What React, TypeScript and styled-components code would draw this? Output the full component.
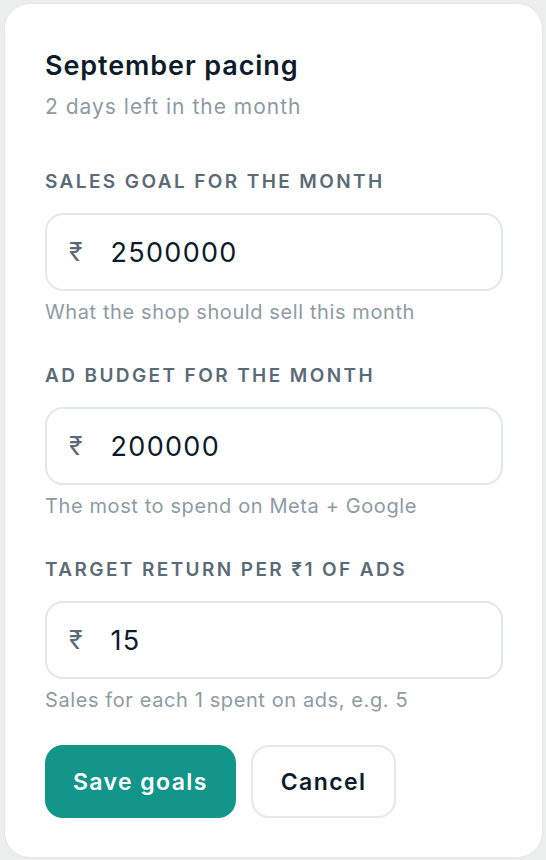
import React from "react";
import styled, { createGlobalStyle } from "styled-components";

const GlobalStyle = createGlobalStyle`
    html, body {
        margin: 0;
        padding: 0;
        background: #eceeee;
        font-family: Inter, "Noto Sans", "DejaVu Sans", sans-serif;
    }
    * { box-sizing: border-box; }
`;

const Page = styled.div`
    padding: 3px 3px 3px 4px;
`;

const Card = styled.div`
    background: #ffffff;
    border: 1px solid #e4e7e7;
    border-radius: 26px;
    padding: 46px 39px 39px 40px;
    display: flex;
    flex-direction: column;
`;

const Title = styled.h2`
    margin: 0;
    font-size: 27px;
    line-height: 32px;
    font-weight: 600;
    color: #0d1b2a;
    letter-spacing: 0.9px;
`;

const Subtitle = styled.p`
    margin: 11px 0 0 0;
    font-size: 21px;
    line-height: 28px;
    letter-spacing: 1px;
    color: #8d9ba3;
`;

const Field = styled.div<{ first?: boolean }>`
    display: flex;
    flex-direction: column;
    margin-top: ${ props => props.first ? "49px" : "39px" };
`;

const Label = styled.label`
    font-size: 19px;
    line-height: 24px;
    font-weight: 600;
    letter-spacing: 2.4px;
    text-transform: uppercase;
    color: #5a6b77;
`;

const InputBox = styled.div`
    margin-top: 19px;
    height: 78px;
    border: 2px solid #e3e8e8;
    border-radius: 18px;
    display: flex;
    align-items: center;
    padding: 0 22px;
    gap: 28px;
`;

const Currency = styled.span`
    font-size: 25px;
    color: #5a6b77;
`;

const Value = styled.input`
    border: none;
    outline: none;
    background: transparent;
    flex: 1;
    min-width: 0;
    font-family: inherit;
    font-size: 27px;
    letter-spacing: 1.3px;
    color: #0d1b2a;
    padding: 0;
`;

const Hint = styled.p`
    margin: 8px 0 0 0;
    font-size: 20px;
    line-height: 26px;
    letter-spacing: 0.6px;
    color: #8d9ba3;
`;

const Actions = styled.div`
    margin-top: 32px;
    display: flex;
    gap: 15px;
`;

const Button = styled.button<{ primary?: boolean }>`
    height: 73px;
    padding: 0 28px;
    border-radius: 18px;
    font-family: inherit;
    font-size: 23px;
    font-weight: 600;
    letter-spacing: 1.4px;
    cursor: pointer;
    background: ${ props => props.primary ? "#12968a" : "#ffffff" };
    color: ${ props => props.primary ? "#ffffff" : "#0d1b2a" };
    border: ${ props => props.primary ? "none" : "2px solid #e6e9e9" };
`;

type FieldProps = {
    label: string;
    value: string;
    hint: string;
    first?: boolean;
};

const GoalField: React.FC<FieldProps> = (props: FieldProps) => {
    return <Field first={ props.first }>
        <Label>{ props.label }</Label>
        <InputBox>
            <Currency>₹</Currency>
            <Value defaultValue={ props.value }/>
        </InputBox>
        <Hint>{ props.hint }</Hint>
    </Field>
}

const App: React.FC = () => {
    return <Page>
        <GlobalStyle/>
        <Card>
            <Title>September pacing</Title>
            <Subtitle>2 days left in the month</Subtitle>
            <GoalField first label="Sales goal for the month" value="2500000" hint="What the shop should sell this month"/>
            <GoalField label="Ad budget for the month" value="200000" hint="The most to spend on Meta + Google"/>
            <GoalField label="Target return per ₹1 of ads" value="15" hint="Sales for each 1 spent on ads, e.g. 5"/>
            <Actions>
                <Button primary>Save goals</Button>
                <Button>Cancel</Button>
            </Actions>
        </Card>
    </Page>
}

export default App;
